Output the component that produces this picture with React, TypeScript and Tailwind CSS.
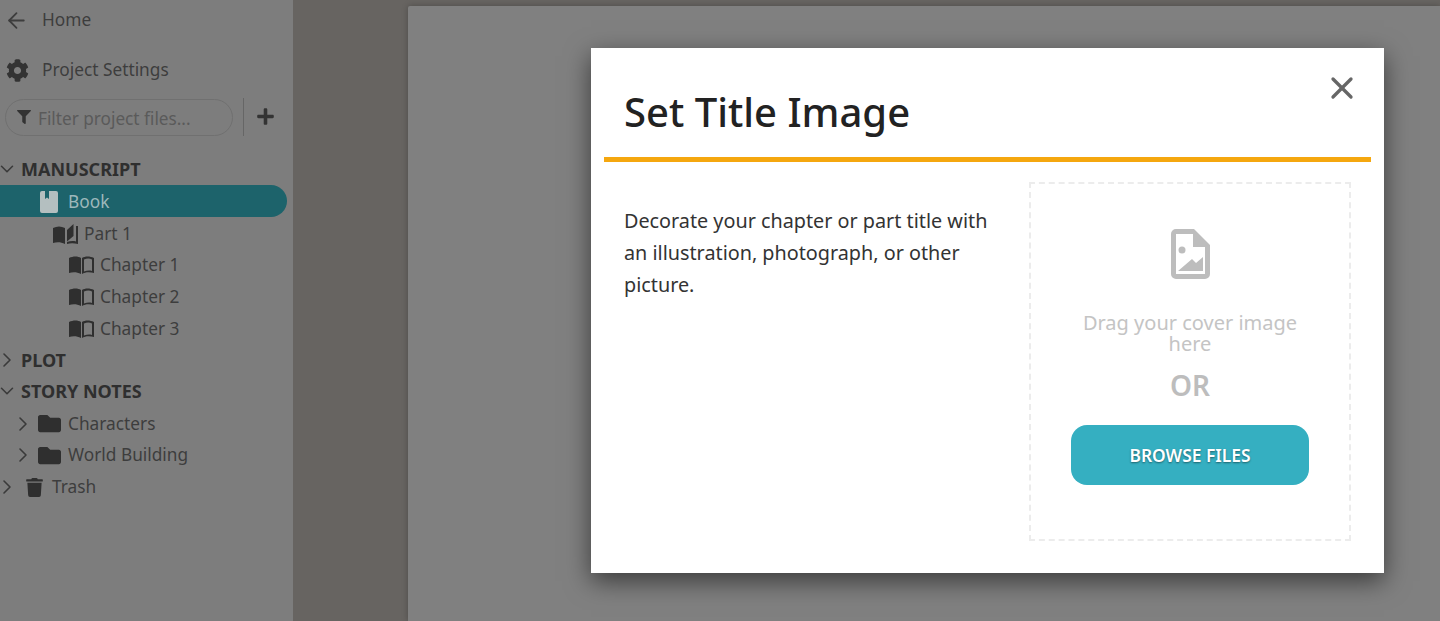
import { ArrowLeft, ChevronDown, ChevronRight, X } from "lucide-react";
import { FaCog, FaFilter, FaFolder, FaPlus, FaTrash } from "react-icons/fa";

function BookmarkBook({ className }: { className?: string }) {
  return (
    <svg viewBox="0 0 18 22" className={className} fill="currentColor">
      <path d="M2 0h3v8l2-1.500L9 8V0h7a2 2 0 0 1 2 2v18a2 2 0 0 1-2 2H2a2 2 0 0 1-2-2V2a2 2 0 0 1 2-2z" />
    </svg>
  );
}

function PartBook({ className }: { className?: string }) {
  return (
    <svg viewBox="0 0 25 21" className={className} fill="currentColor">
      <path d="M0 5C4 3 8 3 12 5V21C8 19 4 19 0 20z" />
      <path d="M14 7l6.500-6V13L14 18.500z" />
      <path d="M23 3h2v18c-4-1-8-1-11 0v-2c3-1 6-1.200 9-.5z" />
    </svg>
  );
}

function ChapterBook({ className }: { className?: string }) {
  return (
    <svg viewBox="0 0 25 18" className={className} fill="currentColor">
      <path d="M0 2C4 0 9 0 12 2V18C8 16 4 16 0 17z" />
      <path
        fillRule="evenodd"
        d="M13 2C16 0 21 0 25 2V17C21 16 16 16 13 18zM15 3.500V15.500C18 14.500 20.500 14.300 23 15V3.500C20.500 2.300 18 2.300 15 3.500z"
      />
    </svg>
  );
}

function FileImage({ className }: { className?: string }) {
  return (
    <svg viewBox="0 0 39 50" className={className} fill="currentColor">
      <path
        fillRule="evenodd"
        d="M5 0H23L39 16V45a5 5 0 0 1-5 5H5a5 5 0 0 1-5-5V5a5 5 0 0 1 5-5zM5 5V45H34V18H22V5z"
      />
      <circle cx="11" cy="21" r="3.500" />
      <path d="M7 42L21 30l4 4 7-6V42z" />
    </svg>
  );
}

type RowProps = {
  label: string;
  indent: number;
  icon?: React.ReactNode;
  chevron?: "right" | "down";
  chevronLeft?: number;
  bold?: boolean;
};

function TreeRow({ label, indent, icon, chevron, chevronLeft = 0, bold }: RowProps) {
  return (
    <div className="relative flex h-[31.7px] items-center" style={{ paddingLeft: indent }}>
      {chevron === "down" && (
        <ChevronDown size={22} strokeWidth={1.7} className="absolute -mt-[2px] text-[#3a3a3a]" style={{ left: chevronLeft }} />
      )}
      {chevron === "right" && (
        <ChevronRight size={24} strokeWidth={1.6} className="absolute text-[#3a3a3a]" style={{ left: chevronLeft }} />
      )}
      {icon}
      {bold ? (
        <span className={chevron === "down" ? "-mt-[2px] text-[18px] font-bold text-[#2f2f2f]" : "text-[18px] font-bold text-[#2f2f2f]"}>
          {label}
        </span>
      ) : (
        <span className="text-[17.3px] text-[#3d3d3d]">{label}</span>
      )}
    </div>
  );
}

export default function App() {
  return (
    <div className="relative flex h-screen overflow-hidden bg-[#676461] font-['Noto_Sans','Open_Sans',sans-serif]">
      <aside className="w-[293px] shrink-0 bg-[#7d7d7d]">
        <div className="flex h-[40px] items-center gap-[13px] pl-[4px] text-[#3d3d3d]">
          <ArrowLeft size={25} strokeWidth={1.7} />
          <span className="text-[17.3px]">Home</span>
        </div>
        <div className="mt-[10px] flex h-[40px] items-center gap-[13px] pl-[6px] text-[#3d3d3d]">
          <FaCog size={23} className="text-[#333333]" />
          <span className="text-[17.3px]">Project Settings</span>
        </div>
        <div className="mt-[8px] flex items-center pl-[5px]">
          <div className="flex h-[37px] w-[228px] items-center gap-[7px] rounded-full border border-[#707070] pl-[11px] text-[#5a5a5a]">
            <FaFilter size={14} className="text-[#333333]" />
            <span className="pt-[4px] text-[17.2px]">Filter project files...</span>
          </div>
          <div className="ml-[10px] h-[38px] w-px bg-[#666666]" />
          <FaPlus size={19} className="mb-[1px] ml-[12px] text-[#333333]" />
        </div>
        <div className="mt-[18.4px]">
          <TreeRow label="MANUSCRIPT" indent={21} chevron="down" chevronLeft={-4} bold />
          <div className="-mt-px mb-px mr-[6px] rounded-r-full bg-[#1d636b]">
            <div className="flex h-[31.7px] items-center gap-[10px] pl-[40px] pt-[2px] text-[#9db8bb]">
              <BookmarkBook className="h-[22px] w-[18px] text-[#b4bfc0]" />
              <span className="text-[17.3px]">Book</span>
            </div>
          </div>
          <TreeRow label="Part 1" indent={53} icon={<PartBook className="mr-[6px] h-[21px] w-[25px] text-[#2f2f2f]" />} />
          <TreeRow label="Chapter 1" indent={69} icon={<ChapterBook className="mr-[6px] h-[18px] w-[25px] text-[#2f2f2f]" />} />
          <TreeRow label="Chapter 2" indent={69} icon={<ChapterBook className="mr-[6px] h-[18px] w-[25px] text-[#2f2f2f]" />} />
          <TreeRow label="Chapter 3" indent={69} icon={<ChapterBook className="mr-[6px] h-[18px] w-[25px] text-[#2f2f2f]" />} />
          <TreeRow label="PLOT" indent={21} chevron="right" chevronLeft={-5} bold />
          <TreeRow label="STORY NOTES" indent={21} chevron="down" chevronLeft={-4} bold />
          <TreeRow label="Characters" indent={38} chevron="right" chevronLeft={11} icon={<FaFolder size={23} className="mr-[7px] text-[#2f2f2f]" />} />
          <TreeRow label="World Building" indent={38} chevron="right" chevronLeft={11} icon={<FaFolder size={23} className="mr-[7px] text-[#2f2f2f]" />} />
          <TreeRow label="Trash" indent={25} chevron="right" chevronLeft={-5} icon={<FaTrash size={19} className="mr-[8px] text-[#2f2f2f]" />} />
        </div>
      </aside>

      <main className="flex-1 pl-[115px] pt-[6px]">
        <div className="h-full rounded-tl-[2px] bg-[#808080] shadow-[0_0_6px_rgba(0,0,0,0.25)]" />
      </main>

      {/* modal sits over the dimmed page */}
      <div className="absolute left-[591px] top-[48px] flex h-[525px] w-[793px] flex-col bg-white px-[13px] shadow-[0_8px_24px_rgba(0,0,0,0.55)]">
        <X size={36} strokeWidth={2.2} className="absolute right-[24px] top-[22px] text-[#666666]" />
        <div className="flex h-[114px] shrink-0 items-center border-b-[5px] border-[#f5a70f] pl-[20px] pt-[18px]">
          <h1 className="text-[40px] font-medium text-[#222222]">Set Title Image</h1>
        </div>
        <div className="flex min-h-0 flex-1 pt-[20px]">
          <p className="w-[425px] pl-[20px] pr-[30px] pt-[23px] text-[19.8px] leading-[32px] text-[#333333]">
            Decorate your chapter or part title with an illustration, photograph, or other picture.
          </p>
          <div className="flex h-[359px] w-[322px] flex-col items-center border-2 border-dashed border-[#ececec] pt-[45px]">
            <FileImage className="h-[50px] w-[39px] text-[#bdbdbd]" />
            <p className="mt-[33px] w-[240px] text-center text-[20px] leading-[21px] text-[#c4c4c4]">
              Drag your cover image here
            </p>
            <span className="mt-[12px] text-[28px] font-semibold leading-[38px] text-[#bdbdbd]">OR</span>
            <button className="mt-[21px] h-[60px] w-[238px] rounded-[16px] bg-[#35afc1] pt-px text-[17.4px] font-semibold text-white [text-shadow:0_1px_2px_rgba(0,0,0,0.45)]">
              BROWSE FILES
            </button>
          </div>
        </div>
      </div>
    </div>
  );
}
